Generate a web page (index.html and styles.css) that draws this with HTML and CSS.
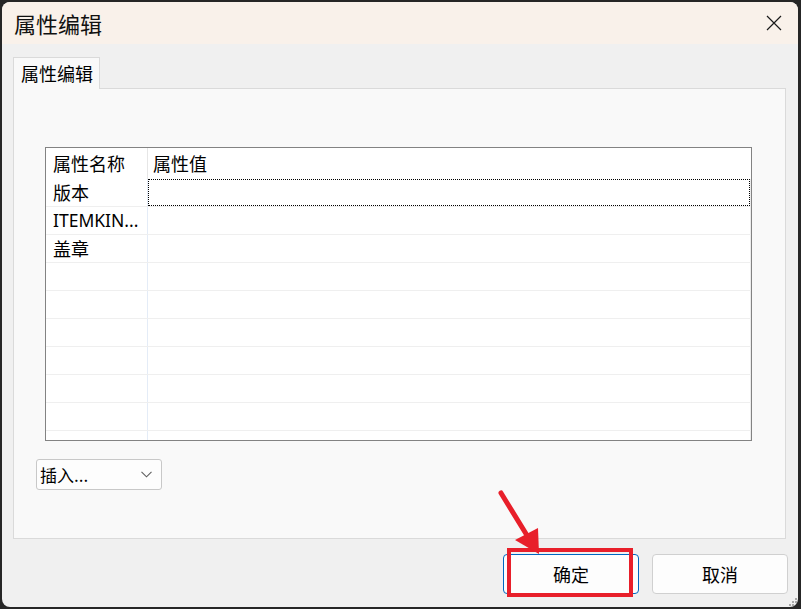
FILE: index.html
```html
<!DOCTYPE html>
<html lang="zh-CN">
<head>
<meta charset="utf-8">
<title>属性编辑</title>
<link rel="stylesheet" href="styles.css">
</head>
<body>
<div class="window">
  <div class="titlebar">
    <div class="title">属性编辑</div>
    <div class="close">
      <svg width="16" height="16" viewBox="0 0 16 16"><path d="M1 1 L15 15 M15 1 L1 15" stroke="#1a1a1a" stroke-width="1.2" fill="none"/></svg>
    </div>
  </div>
  <div class="content">
    <div class="tabs"><div class="tab">属性编辑</div></div>
    <div class="panel">
      <div class="grid">
        <div class="row head"><div class="c1">属性名称</div><div class="c2">属性值</div></div>
        <div class="row"><div class="c1">版本</div><div class="c2"><div class="focus"></div></div></div>
        <div class="row"><div class="c1 latin">ITEMKIN...</div><div class="c2"></div></div>
        <div class="row"><div class="c1">盖章</div><div class="c2"></div></div>
        <div class="row"><div class="c1"></div><div class="c2"></div></div>
        <div class="row"><div class="c1"></div><div class="c2"></div></div>
        <div class="row"><div class="c1"></div><div class="c2"></div></div>
        <div class="row"><div class="c1"></div><div class="c2"></div></div>
        <div class="row"><div class="c1"></div><div class="c2"></div></div>
        <div class="row"><div class="c1"></div><div class="c2"></div></div>
        <div class="row"><div class="c1"></div><div class="c2"></div></div>
      </div>
      <div class="combo">
        <span>插入...</span>
        <svg width="11" height="7" viewBox="0 0 11 7"><path d="M0.5 0.8 L5.5 5.8 L10.5 0.8" stroke="#5f5f5f" stroke-width="1.1" fill="none"/></svg>
      </div>
    </div>
    <div class="footer">
      <div class="btn default">确定</div>
      <div class="btn">取消</div>
    </div>
  </div>
  <div class="grip">
    <svg width="10" height="10" viewBox="0 0 10 10" fill="#a8a8a8"><rect x="7" y="1" width="2" height="2"/><rect x="4" y="4" width="2" height="2"/><rect x="7" y="4" width="2" height="2"/><rect x="1" y="7" width="2" height="2"/><rect x="4" y="7" width="2" height="2"/><rect x="7" y="7" width="2" height="2"/></svg>
  </div>
</div>
<div class="mark-rect"></div>
<svg class="mark-arrow" width="801" height="609" viewBox="0 0 801 609">
  <line x1="501" y1="493" x2="528" y2="537" stroke="#e81f2a" stroke-width="5" stroke-linecap="round"/>
  <polygon points="515,540 538,528 539,554" fill="#e81f2a"/>
</svg>
</body>
</html>
```

FILE: styles.css
```css
* { box-sizing: border-box; }
html, body { margin: 0; padding: 0; }
body {
  width: 801px;
  height: 609px;
  background: #262626;
  font-family: "Noto Sans", "Noto Sans CJK SC", sans-serif;
  color: #000;
  overflow: hidden;
  position: relative;
}
.window {
  position: absolute;
  left: 2px;
  top: 2px;
  width: 796px;
  height: 605px;
  background: #f0f0f0;
  border-radius: 8px;
  overflow: hidden;
  display: flex;
  flex-direction: column;
}
.titlebar {
  height: 42px;
  background: #f9f1ea;
  display: flex;
  justify-content: space-between;
  align-items: center;
  flex: none;
}
.title {
  padding-left: 12px;
  font-family: "Noto Sans CJK SC", sans-serif;
  font-size: 22px;
  line-height: 42px;
  color: #111;
}
.close {
  width: 48px;
  height: 42px;
  display: flex;
  align-items: center;
  justify-content: center;
}
.content {
  flex: 1;
  padding: 13px 12px 0 11px;
  display: flex;
  flex-direction: column;
}
.tabs { display: flex; height: 31px; position: relative; z-index: 1; }
.tab {
  width: 87px;
  height: 32px;
  background: #f9f9f9;
  border: 1px solid #dadada;
  border-bottom: none;
  font-family: "Noto Sans CJK SC", sans-serif;
  font-size: 18px;
  line-height: 30px;
  padding-left: 7px;
}
.panel {
  height: 451px;
  width: 773px;
  background: #f9f9f9;
  border: 1px solid #dadada;
  padding: 58px 0 0 22px;
}
.grid {
  margin-left: 9px;
  width: 707px;
  height: 294px;
  border: 1px solid #838383;
  background: #fff;
  overflow: hidden;
  font-family: "Noto Sans CJK SC", sans-serif;
  font-size: 18px;
}
.row {
  display: grid;
  grid-template-columns: 102px 1fr;
  height: 28px;
  border-bottom: 1px solid #efefef;
}
.row.head { height: 31px; border-bottom: none; }
.c1 {
  border-right: 1px solid #e4ecf7;
  padding-left: 7px;
  line-height: 27px;
  white-space: nowrap;
  overflow: hidden;
}
.head .c1 { border-right-color: #e6e6e6; line-height: 31px; }
.c2 {
  padding-left: 5px;
  line-height: 27px;
  border-right: 1px solid #ececec;
}
.head .c2 { line-height: 31px; border-right: none; }
.latin { font-family: "Noto Sans", sans-serif; font-size: 17.5px; }
.focus {
  margin-left: -5px;
  height: 27px;
  border: 1px dotted #000;
}
.combo {
  margin-top: 18px;
  width: 126px;
  height: 31px;
  border: 1px solid #c8c8c8;
  border-radius: 3px;
  background: #fdfdfd;
  display: flex;
  align-items: center;
  justify-content: space-between;
  padding: 0 9px 0 3px;
  font-size: 17px;
}
.combo span { font-family: "Noto Sans CJK SC", sans-serif; }
.footer {
  display: flex;
  justify-content: flex-end;
  gap: 13px;
  margin-top: 15px;
  margin-right: -2px;
}
.btn {
  width: 136px;
  height: 40px;
  border: 1px solid #d0d0d0;
  border-radius: 4px;
  background: #fdfdfd;
  display: flex;
  align-items: center;
  justify-content: center;
  font-family: "Noto Sans CJK SC", sans-serif;
  font-size: 18px;
}
.btn.default { border-color: #0067c0; }
.grip {
  position: absolute;
  right: 0;
  bottom: 0;
  width: 10px;
  height: 10px;
  display: flex;
}
.mark-rect {
  position: absolute;
  left: 507px;
  top: 548px;
  width: 126px;
  height: 49px;
  border: 4px solid #e81f2a;
}
.mark-arrow {
  position: absolute;
  left: 0;
  top: 0;
  pointer-events: none;
}
```
